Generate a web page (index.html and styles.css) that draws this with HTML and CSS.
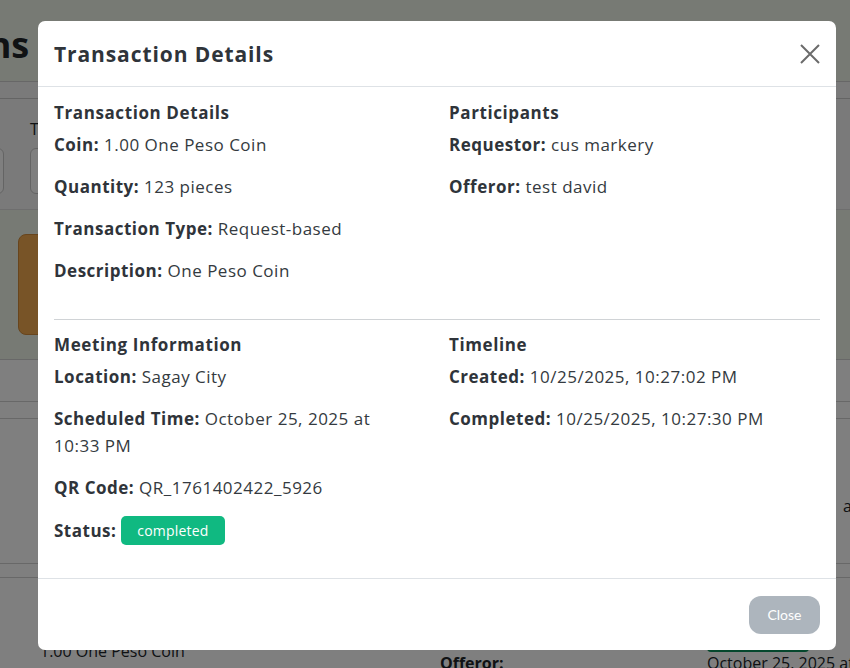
FILE: index.html
```html
<!DOCTYPE html>
<html lang="en">
<head>
<meta charset="utf-8">
<title>Transaction Details</title>
<link rel="stylesheet" href="styles.css">
</head>
<body>
<div class="page">
  <header class="page-head"><h1 class="page-title">Transactions</h1></header>
  <div class="tabs-band"></div>
  <section class="filters">
    <div class="filter left">
      <div class="finput stub"></div>
      <div class="fgroup"><span class="flabel">Type</span><div class="finput"></div></div>
    </div>
    <div class="filter right"><div class="fgroup"><span class="flabel">Search</span><div class="finput"></div></div></div>
  </section>
  <section class="summary">
    <div class="scard"><span class="sicon"></span><span class="stext">S</span></div>
  </section>
  <div class="thead"></div>
  <div class="thead2"></div>
  <div class="trow"><span class="tcell-a">a</span></div>
  <div class="trow2"></div>
  <div class="trow3">
    <span class="cell1">1.00 One Peso Coin</span>
    <span class="cell2">Offeror:</span>
    <span class="cell3"><span class="gbar"></span>October 25, 2025 at</span>
  </div>
</div>
<div class="overlay"></div>

<div class="modal" role="dialog">
  <div class="modal-header">
    <h2 class="modal-title">Transaction Details</h2>
    <button class="btn-x" aria-label="Close">
      <svg width="20" height="20" viewBox="0 0 20 20"><path d="M1 1 L19 19 M19 1 L1 19" stroke="#6b6b6b" stroke-width="2" fill="none"/></svg>
    </button>
  </div>
  <div class="modal-body">
    <div class="row">
      <div class="col">
        <h3 class="sec">Transaction Details</h3>
        <p><b>Coin:</b> 1.00 One Peso Coin</p>
        <p><b>Quantity:</b> 123 pieces</p>
        <p><b>Transaction Type:</b> Request-based</p>
        <p><b>Description:</b> One Peso Coin</p>
      </div>
      <div class="col">
        <h3 class="sec">Participants</h3>
        <p><b>Requestor:</b> cus markery</p>
        <p><b>Offeror:</b> test david</p>
      </div>
    </div>
    <hr class="divider">
    <div class="row">
      <div class="col">
        <h3 class="sec">Meeting Information</h3>
        <p><b>Location:</b> Sagay City</p>
        <p><b>Scheduled Time:</b> October 25, 2025 at <span class="nowrap">10:33 PM</span></p>
        <p><b>QR Code:</b> QR_1761402422_5926</p>
        <p><b>Status:</b> <span class="badge">completed</span></p>
      </div>
      <div class="col">
        <h3 class="sec">Timeline</h3>
        <p><b>Created:</b> 10/25/2025, 10:27:02 PM</p>
        <p><b>Completed:</b> 10/25/2025, 10:27:30 PM</p>
      </div>
    </div>
  </div>
  <div class="modal-footer">
    <button class="btn-close">Close</button>
  </div>
</div>
</body>
</html>
```

FILE: styles.css
```css
* { box-sizing: border-box; }
html, body { margin: 0; padding: 0; }
body {
  width: 850px;
  height: 668px;
  overflow: hidden;
  font-family: "Open Sans", "Liberation Sans", sans-serif;
  color: #343a40;
  background: #ffffff;
  position: relative;
}

/* underlying page */
.page { width: 850px; }
.page-head {
  height: 82px;
  background: #eef5e8;
  border-bottom: 1px solid #cfcfcf;
  display: flex;
  align-items: center;
  overflow: hidden;
}
.page-title {
  margin: 8px 0 0 -202px;
  font-size: 36px;
  font-weight: 700;
  color: #212529;
  white-space: nowrap;
}
.tabs-band { height: 17px; background: #f4f4f4; border-bottom: 1px solid #c9c9c9; }
.filters {
  height: 111px;
  background: #f4f4f4;
  border-bottom: 1px solid #dcdcdc;
  display: flex;
  justify-content: space-between;
  overflow: hidden;
}
.filter { display: flex; align-items: flex-end; gap: 26px; padding-bottom: 15px; }
.filter.left { margin-left: -56px; }
.filter.right { margin-right: -100px; }
.fgroup { display: flex; flex-direction: column; gap: 8px; }
.flabel { font-size: 16px; color: #212529; line-height: 22px; }
.finput { width: 60px; height: 46px; border: 1px solid #c8c8c8; border-radius: 6px; background: #fff; }
.summary { height: 150px; background: #eef5e8; border-bottom: 1px solid #d0d0d0; padding: 24px 0 0 18px; }
.scard {
  width: 60px; height: 101px; background: #f0a84f; border-radius: 8px; border: 1px solid #d08a3a;
  display: flex; flex-direction: column; align-items: flex-end; padding: 16px 0 0; gap: 8px;
}
.sicon { width: 24px; height: 24px; border-radius: 50%; background: #fbe3c3; margin-right: -12px; }
.stext { font-size: 14px; color: #fde7c9; margin-right: 3px; }
.thead { height: 42px; background: #ffffff; border-bottom: 1px solid #d0d0d0; }
.thead2 { height: 17px; background: #ffffff; border-bottom: 1px solid #d0d0d0; }
.trow { height: 145px; background: #fff; border-bottom: 1px solid #d0d0d0; position: relative; }
.tcell-a { position: absolute; right: -2px; top: 76px; font-size: 16px; color: #212529; }
.trow2 { height: 14px; background: #fff; border-bottom: 1px solid #d0d0d0; }
.trow3 { height: 90px; background: #fff; position: relative; font-size: 16px; color: #212529; }
.cell1 { position: absolute; left: 40px; top: 62px; }
.cell2 { position: absolute; left: 440px; top: 74px; font-weight: 700; }
.cell3 { position: absolute; left: 707px; top: 74px; white-space: nowrap; }
.gbar { position: absolute; left: 0; top: -22px; width: 102px; height: 22px; background: #0a8f5a; border-radius: 4px; }

.overlay { position: absolute; inset: 0; background: rgba(0,0,0,0.5); }

/* modal */
.modal {
  position: absolute;
  left: 38px;
  top: 21px;
  width: 798px;
  height: 629px;
  background: #fff;
  border-radius: 7px;
  display: flex;
  flex-direction: column;
  overflow: hidden;
}
.modal-header {
  height: 66px;
  flex: none;
  border-bottom: 1px solid #dee2e6;
  display: flex;
  align-items: center;
  justify-content: space-between;
  padding: 0 16px;
}
.modal-title { margin: 0; font-size: 21px; letter-spacing: 0.9px; font-weight: 700; color: #2f343a; }
.btn-x { background: none; border: 0; padding: 0; width: 20px; height: 20px; display: flex; }
.modal-body { flex: 1; padding: 12px 16px 0; }
.row { display: flex; gap: 24px; }
.col { flex: 1; min-width: 0; }
.sec { margin: 0 0 5px; font-size: 17px; letter-spacing: 0.6px; font-weight: 700; line-height: 27px; color: #2f343a; }
.col p { margin: 0 0 15px; font-size: 17px; letter-spacing: 0.5px; line-height: 27px; color: #343a40; }
.col p b { color: #2f343a; }
.nowrap { white-space: nowrap; }
.divider { border: 0; border-top: 1px solid #d0d3d6; margin: 20px 0 11px; }
.badge {
  display: inline-block;
  background: #10b981;
  color: #fff;
  font-size: 14px;
  letter-spacing: 0.2px;
  line-height: 19px;
  padding: 5px 16px;
  border-radius: 5px;
  vertical-align: 1px;
}
.modal-footer {
  height: 72px;
  flex: none;
  border-top: 1px solid #dee2e6;
  display: flex;
  align-items: center;
  justify-content: flex-end;
  padding: 0 16px;
}
.btn-close {
  font-family: "Lato", "Liberation Sans", sans-serif;
  font-size: 14px;
  color: #fff;
  background: #adb5bd;
  border: 0;
  border-radius: 12px;
  width: 71px;
  height: 38px;
}
```
